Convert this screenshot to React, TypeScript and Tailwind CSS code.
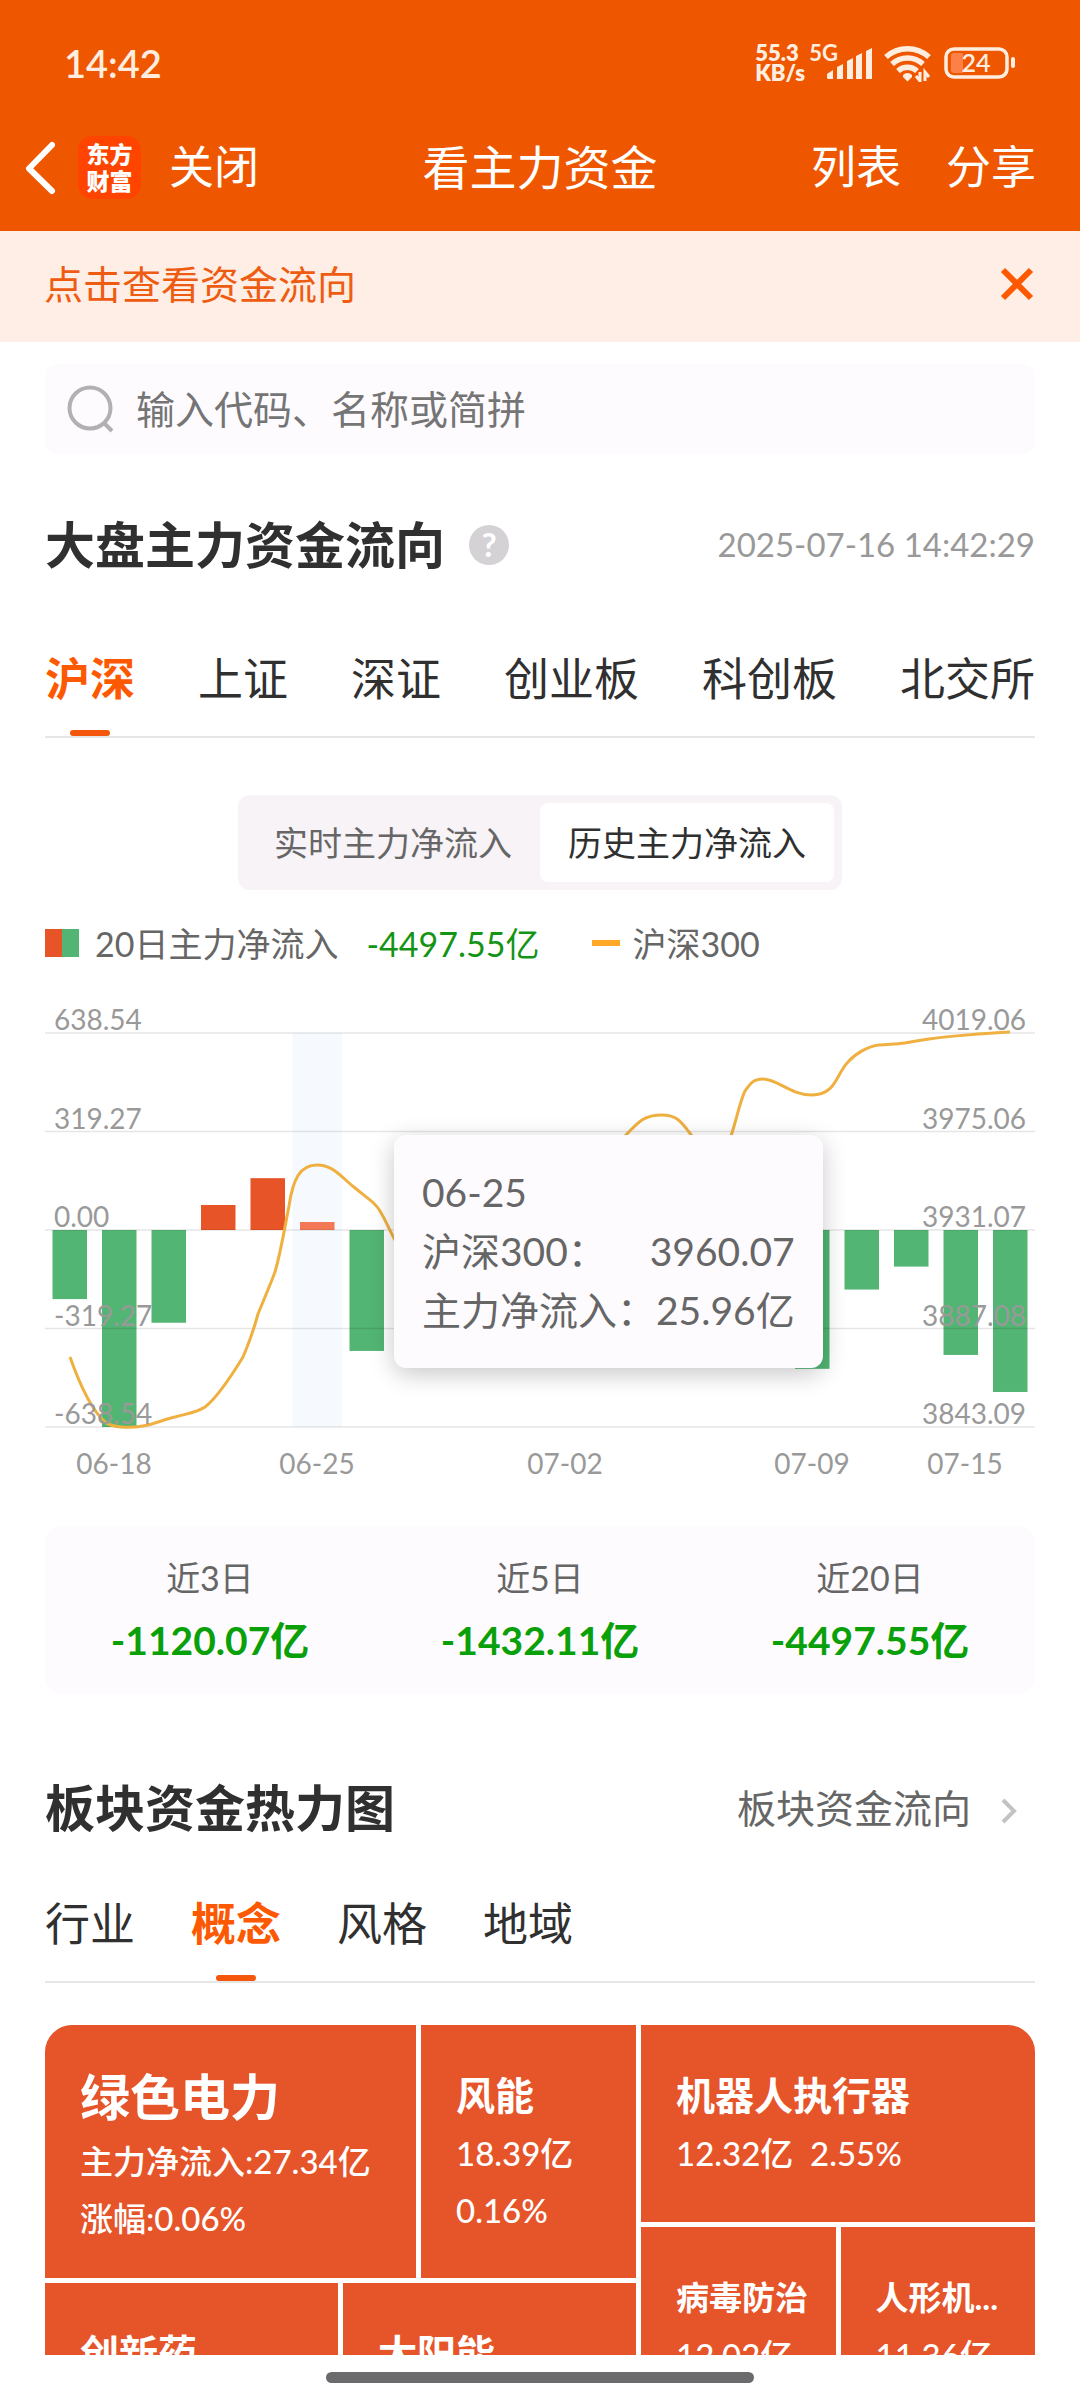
import { useState } from "react";

const INDEX_TABS = ["沪深", "上证", "深证", "创业板", "科创板", "北交所"];
const SECTOR_TABS = ["行业", "概念", "风格", "地域"];

const SUMMARY = [
  { label: "近3日", value: "-1120.07亿" },
  { label: "近5日", value: "-1432.11亿" },
  { label: "近20日", value: "-4497.55亿" },
];

// Daily main-force net inflow, in 亿
const FLOWS = [
  -224, -638.54, -300.6, 81, 168, 25.96, -392, -260, -210, -120, -90, -180, -240, -150, -310, -450, -193, -118.6,
  -405, -525,
];

const LEFT_AXIS = ["638.54", "319.27", "0.00", "-319.27", "-638.54"];
const RIGHT_AXIS = ["4019.06", "3975.06", "3931.07", "3887.08", "3843.09"];
const DATES = [
  { x: 69, text: "06-18" },
  { x: 272, text: "06-25" },
  { x: 520, text: "07-02" },
  { x: 767, text: "07-09" },
  { x: 920, text: "07-15" },
];

const PLOT_TOP = 66;
const ROW = 98.5;
const ZERO = PLOT_TOP + ROW * 2;
const STEP = 49.5;

const INDEX_LINE =
  "M25 390 C37 424 50 446 60 455 C67 461 85 461 98 459 C110 457 120 452 130 450 C145 446 153 445 160 440 C173 430 187 408 198 390 C205 374 210 358 213 347 C219 332 226 316 230 305 C236 284 240 259 244 239 C248 212 255 198 272 198 C288 198 295 209 310 221 C325 233 330 236 335 244 C341 254 345 264 349 271 C380 330 400 350 420 340 C470 310 520 232 580 169 C595 153 600 148 617 148 C633 148 637 156 647 169 C660 186 676 190 686 169 C692 151 695 134 700 124 C707 114 710 112 718 112 C733 112 745 128 767 128 C791 128 791 107 803 95 C810 87 823 79 834 78 C848 77 852 77 860 76 C870 74 876 73 884 72 C898 70 940 66 965 65";

function Tabs({ items, active, onSelect, className }: { items: string[]; active: string; onSelect: (t: string) => void; className: string }) {
  return (
    <div role="tablist" className={`flex border-b-2 border-[#e6e6e6] ${className}`}>
      {items.map((t) => (
        <button
          key={t}
          type="button"
          role="tab"
          aria-selected={t === active}
          onClick={() => onSelect(t)}
          className={`relative pb-[27px] text-[45px] leading-[60px] ${t === active ? "font-bold text-[#fd5902]" : "text-[#303030]"}`}
        >
          {t}
          {t === active && <span className="absolute bottom-0 left-1/2 h-1.5 w-10 -translate-x-1/2 rounded-full bg-[#f4570c]" />}
        </button>
      ))}
    </div>
  );
}

function StatusBar() {
  return (
    <div className="flex h-[104px] items-center justify-between pt-[22px] pr-16 pl-16 text-[#ffeee0]">
      <span className="text-[38px] font-semibold">14:42</span>
      <div className="flex items-center">
        <span className="flex w-[54px] flex-col text-[22px] leading-[20px] font-extrabold">
          <span>55.3</span>
          <span>KB/s</span>
        </span>
        <span className="self-start text-[22px] leading-[20px] font-bold">5G</span>
        <svg className="-ml-3" width="46" height="36" viewBox="16 0 46 36" fill="currentColor" aria-label="信号">
          <path d="M17 33v-4l6-4v9h-5zM27 34V22l6-3v15zM37 34V16l6-3v21zM46 34V11l6-3v26zM56 34V6l6-3v31z" />
        </svg>
        <svg className="ml-3" width="48" height="38" viewBox="0 0 48 38" fill="none" stroke="currentColor" strokeWidth="5.500" aria-label="Wi-Fi">
          <path d="M2 13a32 32 0 0 1 43 0M8 20a23 23 0 0 1 31 0M14 27a14 14 0 0 1 19 0" />
          <path d="M19 31a6 6 0 0 1 9 0v2l-4.500 4.500L19 33z" fill="currentColor" stroke="none" />
          <path d="M36 28v9l-4-5M41 37v-9l4 5" strokeWidth="3" />
        </svg>
        <svg className="ml-3" width="72" height="34" viewBox="0 0 72 34" aria-label="24%">
          <rect x="2" y="3" width="61" height="28" rx="8" fill="none" stroke="currentColor" strokeWidth="3.500" />
          <path d="M10 7h9v20h-9q-3 0-3-3V10q0-3 3-3z" fill="#fb8148" />
          <rect x="67" y="11" width="4" height="11" rx="2" fill="currentColor" />
          <text x="32" y="26" fontSize="25" fontWeight="600" textAnchor="middle" fill="currentColor">
            24
          </text>
        </svg>
      </div>
    </div>
  );
}

function NavBar() {
  return (
    <nav className="grid h-[127px] grid-cols-[1fr_auto_1fr] items-center px-6 text-[45px] text-white">
      <div className="flex items-center">
        <button type="button" aria-label="返回">
          <svg width="32" height="54" viewBox="0 0 32 54" fill="none" stroke="currentColor" strokeWidth="6" strokeLinecap="round" strokeLinejoin="round">
            <path d="M28 4 5 27.500 28 50" />
          </svg>
        </button>
        <span className="ml-[22px] flex size-[63px] flex-col items-center justify-center rounded-[14px] bg-[#ff4400] text-[23px] leading-[27px] font-black">
          <span>东方</span>
          <span>财富</span>
        </span>
        <button type="button" className="ml-7">
          关闭
        </button>
      </div>
      <h1 className="text-[47px]">看主力资金</h1>
      <div className="flex justify-end gap-[45px] pr-5">
        <button type="button">列表</button>
        <button type="button">分享</button>
      </div>
    </nav>
  );
}

function FlowChart() {
  return (
    <div className="relative">
      <svg viewBox="0 0 990 524" className="block w-full" role="img" aria-label="20日主力净流入与沪深300走势">
        <rect x={STEP * 5} y={PLOT_TOP} width={STEP} height={ROW * 4} fill="#f6faff" />
        {FLOWS.map((v, i) => {
          const h = (Math.abs(v) / 638.54) * ROW * 2;
          return (
            <rect
              key={i}
              x={i * STEP + 7.5}
              y={v > 0 ? ZERO - h : ZERO}
              width={34.5}
              height={h}
              fill={v < 0 ? "#52b573" : i === 5 ? "#f27856" : "#e65428"}
            />
          );
        })}
        {LEFT_AXIS.map((t, i) => (
          <line key={t} x1="0" x2="990" y1={PLOT_TOP + i * ROW} y2={PLOT_TOP + i * ROW} stroke="#000" strokeOpacity="0.1" strokeWidth="1.500" />
        ))}
        <path d={INDEX_LINE} fill="none" stroke="#efb040" strokeWidth="3" />
        <g fontSize="28" fill="#999">
          {LEFT_AXIS.map((t, i) => (
            <text key={t} x="9" y={PLOT_TOP + i * ROW - 3}>
              {t}
            </text>
          ))}
          {RIGHT_AXIS.map((t, i) => (
            <text key={t} x="981" y={PLOT_TOP + i * ROW - 3} textAnchor="end">
              {t}
            </text>
          ))}
          {DATES.map((d) => (
            <text key={d.text} x={d.x} y="507" textAnchor="middle">
              {d.text}
            </text>
          ))}
        </g>
      </svg>
      <div className="absolute top-[168px] left-[35.25%] rounded-xl bg-[#fefbff] px-7 py-[28px] text-[39px] leading-[59px] whitespace-nowrap text-[#666] shadow-[0_6px_24px_rgba(0,0,0,0.22)]">
        <p>06-25</p>
        <p className="flex justify-between">
          <span>沪深300：</span>
          <span>3960.07</span>
        </p>
        <p className="flex justify-between">
          <span>主力净流入：</span>
          <span>25.96亿</span>
        </p>
      </div>
    </div>
  );
}

function Tile({ name, lines, className, nameClass }: { name: string; lines: string[]; className: string; nameClass: string }) {
  return (
    <a href="#sector" className={`block min-w-0 bg-[#e65429] pl-[35px] text-[33px] font-medium text-white ${className}`}>
      <h3 className={`truncate ${nameClass}`}>{name}</h3>
      {lines.map((l) => (
        <p key={l} className="leading-[57px] whitespace-pre">
          {l}
        </p>
      ))}
    </a>
  );
}

function HeatMap() {
  return (
    <div className="mt-[42px] grid h-[330px] grid-cols-[3fr_2fr] gap-[5px] overflow-hidden rounded-t-[27px]">
      <div className="flex min-w-0 flex-col gap-[5px]">
        <div className="grid h-[253px] shrink-0 grid-cols-[371fr_215fr] gap-[5px]">
          <Tile name="绿色电力" lines={["主力净流入:27.34亿", "涨幅:0.06%"]} className="pt-9" nameClass="text-[50px] leading-[72px] font-bold" />
          <Tile name="风能" lines={["18.39亿", "0.16%"]} className="pt-10" nameClass="text-[39px] leading-[60px] font-bold" />
        </div>
        <div className="grid h-[253px] shrink-0 grid-cols-[293fr_293fr] gap-[5px]">
          <Tile name="创新药" lines={[]} className="pt-10" nameClass="text-[39px] leading-[60px] font-bold" />
          <Tile name="太阳能" lines={[]} className="pt-10" nameClass="text-[39px] leading-[60px] font-bold" />
        </div>
      </div>
      <div className="flex min-w-0 flex-col gap-[5px]">
        <Tile name="机器人执行器" lines={["12.32亿  2.55%"]} className="h-[197px] shrink-0 pt-10" nameClass="text-[39px] leading-[60px] font-bold" />
        <div className="grid h-[253px] shrink-0 grid-cols-2 gap-[5px]">
          <Tile name="病毒防治" lines={["12.02亿"]} className="pt-10" nameClass="text-[33px] leading-[60px] font-bold" />
          <Tile name="人形机..." lines={["11.36亿"]} className="pt-10" nameClass="text-[33px] leading-[60px] font-bold" />
        </div>
      </div>
    </div>
  );
}

export default function App() {
  const [market, setMarket] = useState("沪深");
  const [sector, setSector] = useState("概念");
  const [mode, setMode] = useState("历史主力净流入");

  return (
    <div className="bg-white font-[Lato,'Noto_Sans_CJK_SC',sans-serif] text-[#303030]">
      <header className="bg-[#ee5700]">
        <StatusBar />
        <NavBar />
      </header>

      <div className="flex h-[111px] items-center justify-between bg-[#ffeee5] pr-[45px] pb-1 pl-11 text-[39px] text-[#ee5c11]">
        <a href="#flow">点击查看资金流向</a>
        <button type="button" aria-label="关闭提示">
          <svg width="36" height="36" viewBox="0 0 36 36" stroke="#fd5902" strokeWidth="6">
            <path d="M4 3l28 28M32 3 4 31" />
          </svg>
        </button>
      </div>

      <main className="px-[45px]">
        <label className="mt-[22px] flex h-[90px] items-center rounded-xl bg-[#fefbff] pl-[22px]">
          <svg width="48" height="48" viewBox="0 0 48 48" fill="none" stroke="#b2b0b2" strokeWidth="4">
            <circle cx="23" cy="23" r="20.500" />
            <path d="m37 38 8 8" />
          </svg>
          <input
            type="text"
            aria-label="搜索"
            placeholder="输入代码、名称或简拼"
            className="ml-[21px] h-full min-w-0 flex-1 bg-transparent text-[39px] outline-none placeholder:text-[#757575]"
          />
        </label>

        <div className="mt-[61px] flex h-[60px] items-center">
          <h2 className="text-[50px] font-bold">大盘主力资金流向</h2>
          <button type="button" aria-label="说明" className="ml-6 flex size-10 items-center justify-center rounded-full bg-[#d5d2d6] text-[33px] font-bold text-white">
            ?
          </button>
          <time className="ml-auto text-[33px] text-[#999]">2025-07-16 14:42:29</time>
        </div>

        <Tabs items={INDEX_TABS} active={market} onSelect={setMarket} className="mt-[74px] justify-between" />

        <div className="mx-auto mt-[57px] flex h-[95px] w-fit rounded-xl bg-[#f7f3f7] p-2 text-[34px]">
          {["实时主力净流入", "历史主力净流入"].map((m) => (
            <button
              key={m}
              type="button"
              aria-pressed={m === mode}
              onClick={() => setMode(m)}
              className={`rounded-lg px-7 ${m === mode ? "bg-white text-[#303030]" : "text-[#666]"}`}
            >
              {m}
            </button>
          ))}
        </div>

        <div className="mt-[29px] flex h-12 items-center text-[34px] text-[#666]">
          <span className="flex h-7 w-[34px] bg-[#e65428]">
            <span className="ml-auto w-1/2 bg-[#52b573]" />
          </span>
          <span className="ml-4">20日主力净流入</span>
          <span className="ml-7 text-[#149414]">-4497.55亿</span>
          <span className="ml-[53px] h-1.5 w-7 bg-[#ffa726]" />
          <span className="ml-3">沪深300</span>
        </div>

        <FlowChart />

        <dl className="mt-[35px] grid grid-cols-3 rounded-2xl bg-[#fefbff] pt-[26px] pb-6 text-center">
          {SUMMARY.map((s) => (
            <div key={s.label}>
              <dt className="text-[34px] leading-[52px] text-[#666]">{s.label}</dt>
              <dd className="mt-1.5 text-[39px] leading-[60px] font-bold text-[#09a009]">{s.value}</dd>
            </div>
          ))}
        </dl>

        <div className="mt-[84px] flex h-[60px] items-center justify-between">
          <h2 className="text-[50px] font-bold">板块资金热力图</h2>
          <a href="#sectors" className="flex items-center pr-4 text-[39px] text-[#666]">
            板块资金流向
            <svg className="mt-1.5 ml-7" width="20" height="28" viewBox="0 0 20 28" fill="none" stroke="#c4c2c4" strokeWidth="4">
              <path d="m4 3 11 11L4 25" />
            </svg>
          </a>
        </div>

        <Tabs items={SECTOR_TABS} active={sector} onSelect={setSector} className="mt-14 gap-14" />

        <HeatMap />
      </main>

      <footer className="flex h-[45px] items-center justify-center">
        <span className="h-[11px] w-[428px] rounded-full bg-[#6b6a6c]" />
      </footer>
    </div>
  );
}
